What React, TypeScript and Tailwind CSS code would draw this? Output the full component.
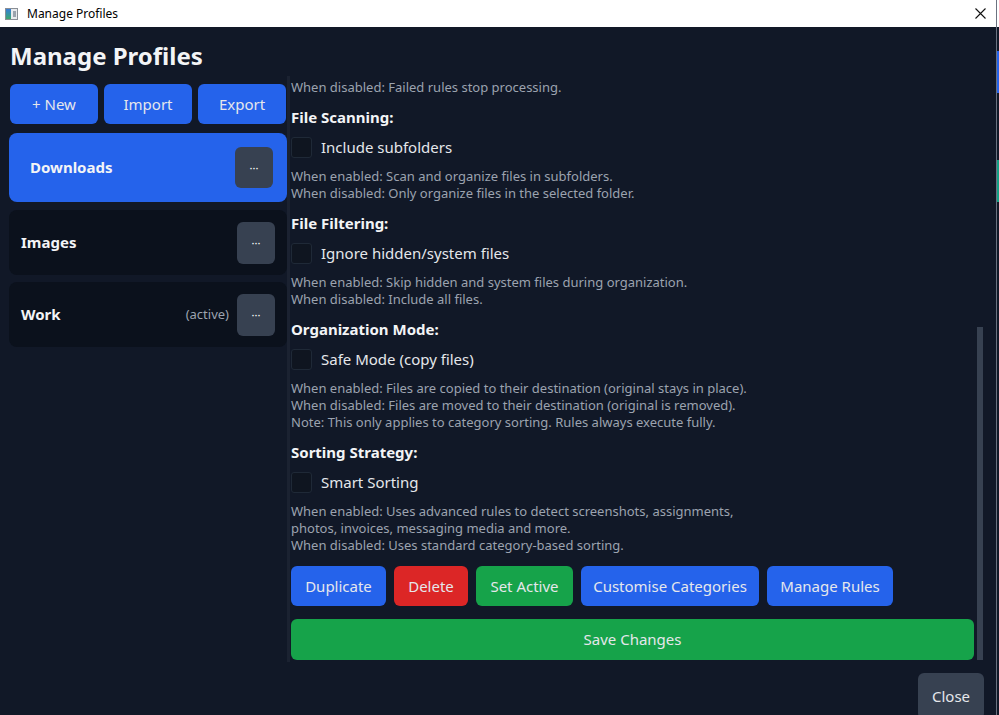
import React from 'react';

const font = "font-['Segoe_UI','Noto_Sans',sans-serif]";

type Section = {
  title: string;
  label: string;
  lines: string[];
};

const sections: Section[] = [
  {
    title: 'File Scanning:',
    label: 'Include subfolders',
    lines: [
      'When enabled: Scan and organize files in subfolders.',
      'When disabled: Only organize files in the selected folder.',
    ],
  },
  {
    title: 'File Filtering:',
    label: 'Ignore hidden/system files',
    lines: [
      'When enabled: Skip hidden and system files during organization.',
      'When disabled: Include all files.',
    ],
  },
  {
    title: 'Organization Mode:',
    label: 'Safe Mode (copy files)',
    lines: [
      'When enabled: Files are copied to their destination (original stays in place).',
      'When disabled: Files are moved to their destination (original is removed).',
      'Note: This only applies to category sorting. Rules always execute fully.',
    ],
  },
  {
    title: 'Sorting Strategy:',
    label: 'Smart Sorting',
    lines: [
      'When enabled: Uses advanced rules to detect screenshots, assignments,',
      'photos, invoices, messaging media and more.',
      'When disabled: Uses standard category-based sorting.',
    ],
  },
];

function DotsButton({ className = '' }: { className?: string }) {
  return (
    <button className={`flex h-[41px] w-[38px] shrink-0 items-center justify-center rounded-md bg-[#374151] text-[11px] leading-none text-white ${className}`}>
      ···
    </button>
  );
}

function SettingBlock({ s }: { s: Section }) {
  return (
    <div className="mt-[11px]">
      <div className="text-[15px] font-bold leading-[20px] text-[#f3f4f6]">{s.title}</div>
      <label className="mt-[9px] flex h-[22px] items-center gap-[9px]">
        <span className="h-[21px] w-[21px] rounded-[3px] border border-[#1f2937] bg-[#0f1520]" />
        <span className="text-[15px] text-[#e5e7eb]">{s.label}</span>
      </label>
      <div className="mt-[10px] text-[13px] leading-[17px] text-[#9ca3af]">
        {s.lines.map((l) => (
          <div key={l}>{l}</div>
        ))}
      </div>
    </div>
  );
}

export default function App() {
  return (
    <div className={`flex h-[715px] w-[999px] overflow-hidden ${font}`}>
      <div className="flex flex-1 flex-col border-r border-[#6b7280]">
        {/* Title bar */}
        <div className="flex h-[27px] shrink-0 items-center bg-white pl-[5px] pr-[10px]">
          <div className="flex h-[12px] w-[13px] border border-[#8a8f96] bg-[#e8eaec]">
            <div className="w-[5px] bg-gradient-to-b from-[#3a7bd5] to-[#3fa66b]" />
            <div className="ml-[2px] mt-[2px] h-[6px] w-[3px] bg-[#9aa3ad]" />
          </div>
          <span className="ml-[9px] text-[12px] text-black">Manage Profiles</span>
          <svg className="ml-auto" width="11" height="11" viewBox="0 0 11 11">
            <path d="M0.5 0.5L10.5 10.5M10.5 0.5L0.5 10.5" stroke="#111" strokeWidth="1.1" />
          </svg>
        </div>

        {/* Body */}
        <div className="flex flex-1 flex-col bg-[#111827] pl-[9px]">
          <h1 className="pl-[1px] pt-[14px] text-[24px] font-bold leading-[30px] text-[#f3f4f6]">Manage Profiles</h1>

          <div className="mt-[5px] flex h-[586px]">
            {/* Sidebar */}
            <div className="w-[278px] pt-[8px]">
              <div className="grid grid-cols-3 gap-[6px] px-[1px]">
                {['+ New', 'Import', 'Export'].map((b) => (
                  <button key={b} className="h-[40px] rounded-md bg-[#2563eb] text-[15px] text-[#e5e7eb]">
                    {b}
                  </button>
                ))}
              </div>

              <div className="mt-[9px] flex flex-col">
                <div className="flex h-[69px] items-center rounded-lg bg-[#2563eb] pl-[21px] pr-[14px]">
                  <span className="flex-1 text-[15px] font-bold text-[#f3f4f6]">Downloads</span>
                  <DotsButton />
                </div>
                <div className="mt-[8px] flex h-[65px] items-center rounded-lg bg-[#0b111c] pl-[12px] pr-[12px]">
                  <span className="flex-1 text-[15px] font-bold text-[#f3f4f6]">Images</span>
                  <DotsButton className="h-[42px]" />
                </div>
                <div className="mt-[7px] flex h-[65px] items-center rounded-lg bg-[#0b111c] pl-[12px] pr-[12px]">
                  <span className="flex-1 text-[15px] font-bold text-[#f3f4f6]">Work</span>
                  <span className="mr-[8px] text-[13px] text-[#9ca3af]">(active)</span>
                  <DotsButton className="h-[42px]" />
                </div>
              </div>
            </div>

            {/* Divider */}
            <div className="w-[3px] bg-[#1b2231]" />

            {/* Scroll area */}
            <div className="flex w-[695px] overflow-hidden">
              <div className="flex-1 pl-[1px] pr-[3px] pt-[3px]">
                <div className="text-[13px] leading-[17px] text-[#9ca3af]">When disabled: Failed rules stop processing.</div>
                {sections.map((s) => (
                  <SettingBlock key={s.title} s={s} />
                ))}

                <div className="mt-[12px] flex gap-[8px]">
                  <button className="h-[40px] w-[95px] rounded-md bg-[#2563eb] text-[15px] text-[#e5e7eb]">Duplicate</button>
                  <button className="h-[40px] w-[74px] rounded-md bg-[#dc2626] text-[15px] text-[#e5e7eb]">Delete</button>
                  <button className="h-[40px] w-[97px] rounded-md bg-[#16a34a] text-[15px] text-[#e5e7eb]">Set Active</button>
                  <button className="h-[40px] w-[178px] rounded-md bg-[#2563eb] text-[15px] text-[#e5e7eb]">Customise Categories</button>
                  <button className="h-[40px] w-[126px] rounded-md bg-[#2563eb] text-[15px] text-[#e5e7eb]">Manage Rules</button>
                </div>

                <button className="mt-[13px] h-[41px] w-full rounded-md bg-[#16a34a] text-[15px] text-[#e5e7eb]">Save Changes</button>
              </div>

              {/* Scrollbar */}
              <div className="flex w-[8px] flex-col pr-[2px]">
                <div className="h-[251px]" />
                <div className="h-[333px] bg-[#374151]" />
              </div>
            </div>
          </div>

          <div className="flex justify-end pr-[12px] pt-[11px]">
            <button className="h-[46px] w-[66px] rounded-md bg-[#374151] text-[15px] text-[#e5e7eb]">Close</button>
          </div>
        </div>
      </div>

      {/* Background window sliver */}
      <div className="flex w-[2px] flex-col bg-[#111827]">
        <div className="h-[27px] bg-white" />
        <div className="mt-[24px] h-[42px] bg-[#2563eb]" />
        <div className="mt-[67px] h-[42px] bg-[#14a085]" />
      </div>
    </div>
  );
}
